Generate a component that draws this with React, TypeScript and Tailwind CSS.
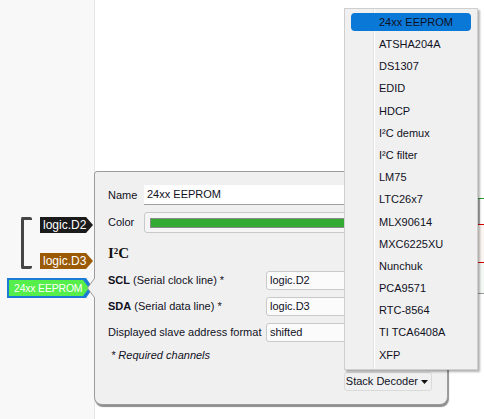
import React from "react";

const decoders = [
  "24xx EEPROM",
  "ATSHA204A",
  "DS1307",
  "EDID",
  "HDCP",
  "I²C demux",
  "I²C filter",
  "LM75",
  "LTC26x7",
  "MLX90614",
  "MXC6225XU",
  "Nunchuk",
  "PCA9571",
  "RTC-8564",
  "TI TCA6408A",
  "XFP",
];

function Tag({ text, bg }: { text: string; bg: string }) {
  return (
    <div className={`flex h-[16px] w-[53px] items-center whitespace-nowrap pl-[3px] text-[12px] leading-none text-white [clip-path:polygon(0_0,46px_0,53px_50%,46px_100%,0_100%)] ${bg}`}>
      {text}
    </div>
  );
}

function Row({ label, value }: { label: React.ReactNode; value: string }) {
  return (
    <div className="flex h-[19px] items-center">
      <div className="w-[158px] shrink-0">{label}</div>
      <div className="flex h-[19px] flex-1 items-center rounded-[3px] border border-[#c9c9c9] bg-[#fbfbfb] pl-[3px]">
        {value}
      </div>
    </div>
  );
}

export default function App() {
  return (
    <div className="relative flex h-[419px] w-[484px] overflow-hidden bg-white font-['Liberation_Sans',Arial,sans-serif] text-[11px] text-[#10101e]">
      <div className="h-full w-[95px] shrink-0 border-r border-[#e6e6e6] bg-[#f8f8f8]" />
      <div className="h-full flex-1 pt-[198px]">
        {/* traces peeking out on the right */}
        <div className="ml-auto flex w-[7px] flex-col">
          <div className="h-[1px] bg-[#2ca02c]" />
          <div className="h-[25px] border-l-[3px] border-[#b9b9b9]" />
          <div className="h-[1px] bg-[#d40000]" />
          <div className="h-[37px] bg-[#fbf6f2]" />
          <div className="h-[1px] bg-[#d40000]" />
          <div className="h-[30px] bg-[#f5f9f5]" />
          <div className="h-[1px] bg-[#9a9a9a]" />
        </div>
      </div>

      {/* channel tags on the trace canvas */}
      <div className="absolute left-[7px] top-[217px] flex flex-col items-end gap-[9px]">
        <div className="flex items-stretch gap-[8px]">
          <div className="h-[52px] w-[11px] rounded-[2px] border-[3px] border-r-0 border-[#454545]" />
          <div className="flex flex-col justify-between">
            <Tag text="logic.D2" bg="bg-[#1b1b1b]" />
            <Tag text="logic.D3" bg="bg-[#9a5a06]" />
          </div>
        </div>
        <div className="flex h-[20px] w-[86px] items-center self-start bg-[#1c7bd6] pl-[2px] [clip-path:polygon(0_0,79px_0,86px_50%,79px_100%,0_100%)]">
          <div className="flex h-[16px] w-[80px] items-center whitespace-nowrap bg-[#55ee4a] pl-[5px] text-[10.5px] leading-none tracking-[-0.2px] text-white [clip-path:polygon(0_0,74px_0,80px_50%,74px_100%,0_100%)]">
            24xx EEPROM
          </div>
        </div>
      </div>

      {/* decoder settings popup */}
      <div className="absolute left-[94px] top-[171px] h-[234px] w-[354px] rounded-[8px] rounded-tl-[3px] border border-[#9c9c9c] bg-[#f0f0f0] pl-[13px] pr-[10px] pt-[13px] shadow-[1px_2px_1px_rgba(0,0,0,0.45)]">
        <svg className="absolute left-[-8px] top-[105px]" width="9" height="24" viewBox="0 0 9 24">
          <polygon points="8.5,0 0.5,11 8.5,22" fill="#f0f0f0" stroke="#9c9c9c" />
          <rect x="8" y="0" width="2" height="24" fill="#f0f0f0" />
        </svg>

        <div className="flex h-[20px] items-center">
          <div className="w-[36px] shrink-0">Name</div>
          <div className="flex h-[20px] flex-1 items-center border-b border-[#a0a0a0] bg-white pl-[3px]">24xx EEPROM</div>
        </div>
        <div className="mt-[7px] flex h-[21px] items-center">
          <div className="w-[36px] shrink-0">Color</div>
          <div className="flex h-[21px] flex-1 items-center rounded-[3px] border border-[#c9c9c9] bg-[#f5f5f5] px-[5px]">
            <div className="h-[10px] w-full border border-[#8a8a8a] bg-[#33aa33]" />
          </div>
        </div>
        <div className="mt-[10px] flex h-[20px] items-center font-['Liberation_Serif',serif] text-[15px] font-bold text-[#111]">
          I²C
        </div>
        <div className="mt-[8px] flex flex-col gap-[7px]">
          <Row label={<><b>SCL</b> (Serial clock line) *</>} value="logic.D2" />
          <Row label={<><b>SDA</b> (Serial data line) *</>} value="logic.D3" />
          <Row label="Displayed slave address format" value="shifted" />
        </div>
        <div className="mt-[5px] h-[16px] pl-[3px] italic leading-[16px]">* Required channels</div>
        <div className="mt-[9px] flex justify-end pr-[5px]">
          <div className="flex h-[19px] items-center gap-[3px] rounded-[3px] border border-[#dadada] pl-[1px] pr-[3px]">
            Stack Decoder
            <svg width="7" height="4" viewBox="0 0 7 4">
              <polygon points="0,0 7,0 3.5,4" fill="#111" />
            </svg>
          </div>
        </div>
      </div>

      {/* decoder type menu */}
      <div className="absolute left-[344px] top-[8px] w-[134px] border border-[#cfcfcf] bg-[#f0f0f0] pb-[3px] pt-[2px] shadow-[2px_2px_2px_rgba(0,0,0,0.3)]">
        <div className="absolute bottom-0 left-[28px] top-0 w-[1px] bg-[#e2e2e2]" />
        <div className="absolute bottom-0 left-[29px] top-0 w-[1px] bg-white" />
        {decoders.map((d, i) => (
          <div key={d} className="relative flex h-[22.2px] items-center px-[6px]">
            <div
              className={`flex h-[18px] w-full items-center rounded-[4px] pl-[28px] ${i === 0 ? "bg-[#0a78d7]" : ""}`}
            >
              {d}
            </div>
          </div>
        ))}
      </div>
    </div>
  );
}
